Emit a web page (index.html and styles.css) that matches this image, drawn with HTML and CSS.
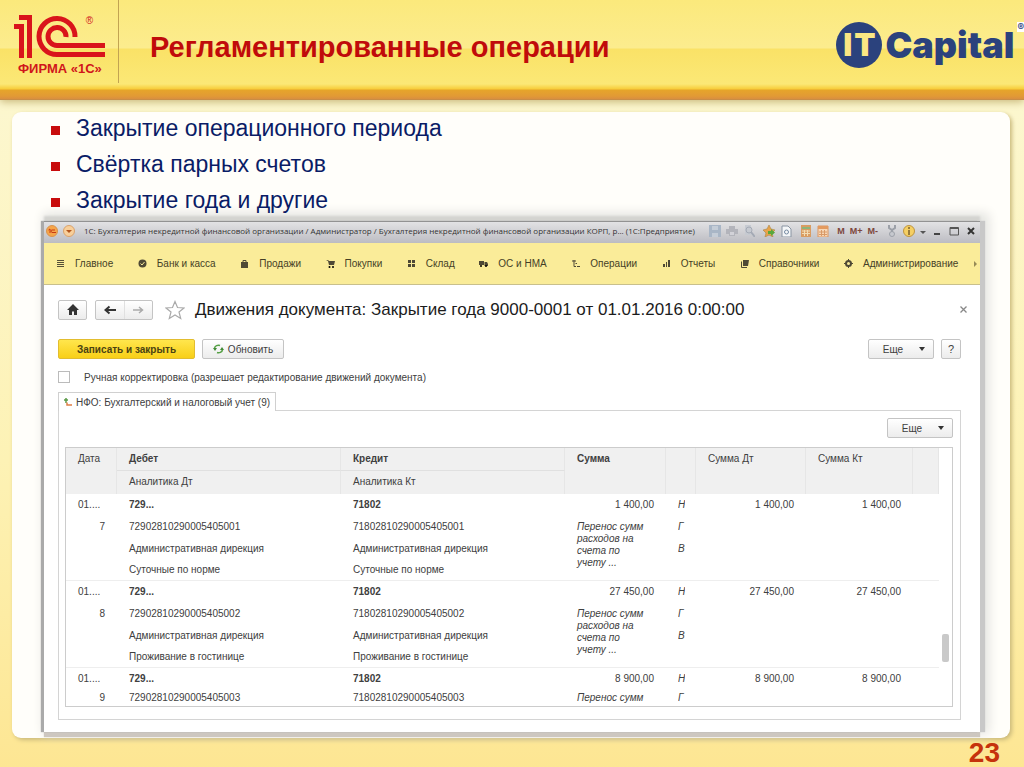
FILE: index.html
```html
<!DOCTYPE html>
<html lang="ru">
<head>
<meta charset="utf-8">
<title>Регламентированные операции</title>
<link rel="stylesheet" href="styles.css">
</head>
<body>
<div class="slide">
<header class="slide-header">
  <div class="firm">
    <svg class="firm-mark" viewBox="0 0 94 46" width="94" height="46" aria-label="1С">
      <g fill="#d9141b"><path d="M6 1H19V44H14V6H6Z"/><path d="M1 10H11V44H6V15H1Z"/></g>
      <g fill="none" stroke="#d9141b" stroke-width="5"><path d="M62 23A18 18 0 1 0 44 40.500H92"/><path d="M53 23A9 9 0 1 0 44 31.500H92"/></g>
    </svg>
    <span class="firm-reg">®</span>
    <span class="firm-name">ФИРМА «1С»</span>
  </div>
  <h1>Регламентированные операции</h1>
  <div class="capital"><span class="it"><span>I</span><span>T</span></span><span class="capital-name">Capital</span><span class="capital-reg">®</span></div>
</header>
<main class="sheet">
  <ul class="points">
    <li>Закрытие операционного периода</li>
    <li>Свёртка парных счетов</li>
    <li>Закрытие года и другие</li>
  </ul>
  <section class="window">
    <div class="titlebar">
      <svg class="orb" viewBox="0 0 12 12"><circle cx="6" cy="6" r="5.500" fill="#f6a54a" stroke="#d9934c"/><path d="M2.500 5L4 4V8M9 5H6Q5 5 5 6T6 7.500H10" stroke="#c63b15" fill="none"/></svg>
      <svg class="orb" viewBox="0 0 12 12"><circle cx="6" cy="6" r="5.500" fill="#f8cf9a" stroke="#d9a26c"/><path d="M3 5H9L6 8Z" fill="#b4561c"/></svg>
      <span class="caption">1С: Бухгалтерия некредитной финансовой организации / Администратор / Бухгалтерия некредитной финансовой организации КОРП, р... (1С:Предприятие)</span>
      <div class="tools">
        <button aria-label="Сохранить"><svg viewBox="0 0 12 12"><path d="M0 0H12V12H0Z" fill="#a9b6c6"/><path d="M3 1H9V5H3ZM3 8H9V12H3Z" fill="#c5cdd7"/></svg></button>
        <button aria-label="Печать"><svg viewBox="0 0 12 12"><path d="M3 1H9V4H12V9H9V11H3V9H0V4H3Z" fill="#b3b4bb"/><path d="M4 7H8V10H4Z" fill="#d2d2d8"/></svg></button>
        <button aria-label="Просмотр"><svg viewBox="0 0 12 12"><path d="M2 0H8V10H2Z" fill="#c6cad1"/><circle cx="6" cy="5" r="3" fill="none" stroke="#a4aab5"/><path d="M8 7L12 12" stroke="#a4aab5" stroke-width="2"/></svg></button>
        <button class="apart" aria-label="В избранное"><svg viewBox="0 0 12 12"><path d="M6 0L8 4L12 5L9 8L10 12L6 10L2 12L3 8L0 5L4 4Z" fill="#e8a349" stroke="#a98445" stroke-width=".6"/><path d="M5 6H8V4L12 7.500L8 11V9H5Z" fill="#59a83c"/></svg></button>
        <button aria-label="Ссылка"><svg viewBox="0 0 12 12"><path d="M2 1H8L11 4V12H2Z" fill="#f4f6f8" stroke="#8994a2"/><circle cx="6.500" cy="7" r="2" fill="none" stroke="#758aa2"/></svg></button>
        <button class="apart" aria-label="Калькулятор"><svg viewBox="0 0 12 12"><path d="M1 0H11V12H1Z" fill="#d99c62"/><path d="M2 2H10V4H2Z" fill="#8db57a"/><path d="M2 6H10M2 8.500H10M4.500 5V11M7.500 5V11" stroke="#f2dcb4"/></svg></button>
        <button aria-label="Календарь"><svg viewBox="0 0 12 12"><path d="M1 1H11V12H1Z" fill="#f7d7b6" stroke="#dc9560"/><path d="M1 1H11V4H1Z" fill="#e39a60"/><path d="M2 7H10M2 9.500H10M4.500 5V11M7.500 5V11" stroke="#d99a68"/></svg></button>
        <button class="memory apart">M</button>
        <button class="memory">M+</button>
        <button class="memory">M-</button>
        <button class="apart" aria-label="Сервис"><svg viewBox="0 0 12 12"><path d="M3 0V3L6 5L9 3V0M6 5V11" fill="none" stroke="#9ca0a8" stroke-width="2"/><circle cx="6" cy="9" r="2.500" fill="#c7c9cf" stroke="#9ca0a8"/></svg></button>
        <button aria-label="Справка"><svg viewBox="0 0 12 12"><circle cx="6" cy="6" r="5.500" fill="#f5cf63" stroke="#bd9440"/><path d="M6 2V4M6 5V10" stroke="#7b6230" stroke-width="1.500"/></svg></button>
        <button class="slim" aria-label="Меню справки"><svg viewBox="0 0 6 12"><path d="M0 6H6L3 9Z" fill="#555"/></svg></button>
        <button aria-label="Свернуть"><svg viewBox="0 0 12 12"><path d="M3 9H9" stroke="#444" stroke-width="2"/></svg></button>
        <button aria-label="Развернуть"><svg viewBox="0 0 12 12"><path d="M2 2.500H10.500V10H2Z" fill="none" stroke="#555"/><path d="M2 3H10" stroke="#555" stroke-width="2"/></svg></button>
        <button aria-label="Закрыть окно"><svg viewBox="0 0 12 12"><path d="M3 3L9 9M9 3L3 9" stroke="#333" stroke-width="2"/></svg></button>
      </div>
    </div>
    <nav class="sections">
      <a href="#"><svg viewBox="0 0 9 9"><path d="M1 1.500H8M1 3.500H8M1 5.500H8M1 7.500H8" stroke="#555038"/></svg>Главное</a>
      <a href="#"><svg viewBox="0 0 9 9"><circle cx="4.500" cy="4.500" r="4" fill="#4e4935"/><path d="M2.500 4.500L4 6L6.500 3" stroke="#f9ec9a" fill="none"/></svg>Банк и касса</a>
      <a href="#"><svg viewBox="0 0 9 9"><path d="M1 3H8V9H1Z" fill="#4e4935"/><path d="M3 4V1.500H6V4" fill="none" stroke="#4e4935"/></svg>Продажи</a>
      <a href="#"><svg viewBox="0 0 9 9"><path d="M0 1H2L3 2H9L8 6H3L2 2Z" fill="#4e4935"/><circle cx="3.500" cy="8" r="1"/><circle cx="7" cy="8" r="1"/></svg>Покупки</a>
      <a href="#"><svg viewBox="0 0 9 9"><path d="M1 1H4V4H1ZM5 1H8V4H5ZM1 5H4V8H1ZM5 5H8V8H5Z" fill="#4e4935"/></svg>Склад</a>
      <a href="#"><svg viewBox="0 0 9 9"><path d="M0 2H5V6H0ZM5.500 3H8L9 5V7H5.500Z" fill="#4e4935"/><circle cx="2" cy="7" r="1"/><circle cx="7" cy="7" r="1"/></svg>ОС и НМА</a>
      <a href="#"><svg viewBox="0 0 9 9"><path d="M1 2H5M3 1V7.500H5M6 7.500H9M4.500 4.500H6" stroke="#4e4935" fill="none"/></svg>Операции</a>
      <a href="#"><svg viewBox="0 0 9 9"><path d="M1 5H3V8H1ZM4 3H5V8H4ZM6 1H8V8H6Z" fill="#4e4935"/></svg>Отчеты</a>
      <a href="#"><svg viewBox="0 0 9 9"><path d="M3 1H9L8 7H3Z" fill="#4e4935"/><path d="M1.500 2.500V8.500H7" stroke="#4e4935" fill="none"/></svg>Справочники</a>
      <a href="#"><svg viewBox="0 0 9 9"><circle cx="4.500" cy="4.500" r="2.500" fill="none" stroke="#4e4935" stroke-width="2"/><path d="M4.500 0V2M4.500 7V9M0 4.500H2M7 4.500H9" stroke="#4e4935"/></svg>Администрирование</a>
      <button class="more" aria-label="Ещё разделы"><svg viewBox="0 0 4 6"><path d="M0 0L3 3L0 6Z" fill="#958a56"/></svg></button>
    </nav>
    <div class="form">
      <div class="form-head">
        <button class="btn home" aria-label="Домой"><svg width="12" height="12" viewBox="0 0 12 12"><path d="M6 0L12 6H10V11H7V7.500H5V11H2V6H0Z" fill="#333"/></svg></button>
        <div class="history">
          <button aria-label="Назад"><svg width="12" height="10" viewBox="0 0 12 10"><path d="M12 5H2M5.500 1.500L1.500 5L5.500 8.500" stroke="#333" stroke-width="2" fill="none"/></svg></button>
          <button aria-label="Вперёд"><svg width="12" height="10" viewBox="0 0 12 10"><path d="M1 5H10M7 2L10.500 5L7 8" stroke="#aaa" stroke-width="1.500" fill="none"/></svg></button>
        </div>
        <svg class="star" viewBox="0 0 20 20"><path d="M10 1.500L12.500 7.500L19 8L14 12L15.700 18.500L10 15L4.300 18.500L6 12L1 8L7.500 7.500Z" fill="none" stroke="#aaa" stroke-width="1.200"/></svg>
        <h2>Движения документа: Закрытие года 9000-0001 от 01.01.2016 0:00:00</h2>
        <button class="close" aria-label="Закрыть"><svg width="7" height="7" viewBox="0 0 7 7"><path d="M.5.5L6.500 6.500M6.500.5L.5 6.500" stroke="#888" stroke-width="1.300"/></svg></button>
      </div>
      <div class="commands">
        <button class="btn primary">Записать и закрыть</button>
        <button class="btn refresh"><svg width="11" height="10" viewBox="0 0 11 10"><path d="M1.500 4A4 3.500 0 0 1 7 1.500M9.500 6A4 3.500 0 0 1 4 8.500" stroke="#55a045" stroke-width="1.500" fill="none"/><path d="M0 4H4L2 7ZM7 6H11L9 3Z" fill="#3f8a35"/></svg>Обновить</button>
        <button class="btn drop">Еще<svg width="6" height="4" viewBox="0 0 6 4"><path d="M0 0H6L3 4Z" fill="#333"/></svg></button>
        <button class="btn help">?</button>
      </div>
      <label class="manual"><input type="checkbox">Ручная корректировка (разрешает редактирование движений документа)</label>
      <div class="tabs" role="tablist"><button class="tab" role="tab" aria-selected="true"><svg width="8" height="8" viewBox="0 0 8 8"><path d="M0 2H4M2 0V5" stroke="#5b9b48" stroke-width="1.500"/><path d="M3 4.500V7H8" stroke="#df7d45" stroke-width="1.500" fill="none"/></svg>НФО: Бухгалтерский и налоговый учет (9)</button></div>
      <div class="pane" role="tabpanel">
        <div class="pane-bar"><button class="btn drop">Еще<svg width="6" height="4" viewBox="0 0 6 4"><path d="M0 0H6L3 4Z" fill="#333"/></svg></button></div>
        <div class="grid">
          <table>
            <colgroup><col class="c-date"><col><col><col class="c-sum"><col class="c-mark"><col class="c-dt"><col class="c-kt"><col class="c-rest"></colgroup>
            <thead>
              <tr><th rowspan="2">Дата</th><th class="strong split">Дебет</th><th class="strong split">Кредит</th><th rowspan="2" class="strong">Сумма</th><th rowspan="2"></th><th rowspan="2">Сумма Дт</th><th rowspan="2">Сумма Кт</th><th rowspan="2"></th></tr>
              <tr><th class="sub">Аналитика Дт</th><th class="sub">Аналитика Кт</th></tr>
            </thead>
            <tbody>
              <tr><td>01....</td><td class="strong">729...</td><td class="strong">71802</td><td class="num">1 400,00</td><td class="mark"><span>Н</span></td><td class="num">1 400,00</td><td class="num">1 400,00</td><td></td></tr>
              <tr><td class="num">7</td><td>72902810290005405001</td><td>71802810290005405001</td><td class="note" rowspan="3">Перенос сумм расходов на счета по учету ...</td><td class="mark"><span>Г</span></td><td></td><td></td><td></td></tr>
              <tr><td></td><td>Административная дирекция</td><td>Административная дирекция</td><td class="mark"><span>В</span></td><td></td><td></td><td></td></tr>
              <tr><td></td><td>Суточные по норме</td><td>Суточные по норме</td><td></td><td></td><td></td><td></td></tr>
            </tbody>
            <tbody>
              <tr><td>01....</td><td class="strong">729...</td><td class="strong">71802</td><td class="num">27 450,00</td><td class="mark"><span>Н</span></td><td class="num">27 450,00</td><td class="num">27 450,00</td><td></td></tr>
              <tr><td class="num">8</td><td>72902810290005405002</td><td>71802810290005405002</td><td class="note" rowspan="3">Перенос сумм расходов на счета по учету ...</td><td class="mark"><span>Г</span></td><td></td><td></td><td></td></tr>
              <tr><td></td><td>Административная дирекция</td><td>Административная дирекция</td><td class="mark"><span>В</span></td><td></td><td></td><td></td></tr>
              <tr><td></td><td>Проживание в гостинице</td><td>Проживание в гостинице</td><td></td><td></td><td></td><td></td></tr>
            </tbody>
            <tbody>
              <tr><td>01....</td><td class="strong">729...</td><td class="strong">71802</td><td class="num">8 900,00</td><td class="mark"><span>Н</span></td><td class="num">8 900,00</td><td class="num">8 900,00</td><td></td></tr>
              <tr><td class="num">9</td><td>72902810290005405003</td><td>71802810290005405003</td><td class="note">Перенос сумм</td><td class="mark"><span>Г</span></td><td></td><td></td><td></td></tr>
            </tbody>
          </table>
          <div class="scroll"><span class="thumb"></span></div>
        </div>
      </div>
    </div>
  </section>
</main>
<footer class="slide-number">23</footer>
</div>
</body>
</html>
```
FILE: styles.css
```css
* { box-sizing: border-box; }
body { margin: 0; font-family: "Liberation Sans", Arial, sans-serif; }
button { font: inherit; color: inherit; padding: 0; border: 0; background: none; }
.slide {
  min-height: 100vh;
  display: flex;
  flex-direction: column;
  background: linear-gradient(#fcf7cf 100px, #fdf2b5 60%, #fde693);
  border-bottom: 1px solid #fffa7d;
}
.slide-header {
  display: flex;
  align-items: flex-start;
  height: 100px;
  background: linear-gradient(#fbe97c, #fcec8e 48px, #fae267 49px, #fbe876 84px, #f7cd3a 89px, #e6a52a 90px, #e29a35 96px, #d98f40 99px, #b98a4a 100px);
  box-shadow: 0 2px 8px #c9b87a;
}
.firm {
  display: grid;
  grid-template-columns: 84px 1fr;
  align-content: start;
  width: 119px;
  height: 83px;
  padding: 14px 0 0 13px;
  border-right: 1px solid #c2a352;
  color: #d0151b;
}
.firm-mark { grid-area: 1 / 1 / 2 / 3; }
.firm-reg { grid-area: 1 / 1 / 2 / 3; justify-self: end; padding-right: 25px; font-size: 10px; line-height: 14px; }
.firm-name { grid-column: 1 / 3; padding-left: 5px; font-size: 13px; line-height: 18px; font-weight: bold; white-space: nowrap; }
h1 { margin: 0 0 0 31px; font-size: 29px; line-height: 94px; color: #c00b0b; }
.capital { display: flex; margin-left: auto; padding-top: 22px; color: #2b427d; font-family: Inter, "DejaVu Sans", sans-serif; font-weight: 900; }
.it { display: flex; justify-content: center; gap: 2px; width: 46px; height: 46px; border-radius: 50%; background: #2b427d; color: #fbe783; font-size: 31px; line-height: 46px; }
.capital-name { margin: 0 3px; font-size: 36px; line-height: 46px; }
.capital-reg { align-self: flex-start; background: #fff; font-size: 10px; line-height: 10px; }
.sheet {
  margin: 12px 14px 0 12px;
  padding: 0 30px 6px 32px;
  border-radius: 9px;
  background: #fffefa;
  box-shadow: 2px 2px 4px #c9b87a;
}
.points { display: grid; gap: 4px; margin: 0; padding: 0 0 0 7px; list-style: none; font-size: 23px; line-height: 32px; color: #0a1c66; }
.points li { display: flex; align-items: center; gap: 16px; }
.points li::before { content: ""; width: 9px; height: 9px; margin-top: 4px; background: #c80c0c; }
.window {
  margin-top: 5px;
  background: #fff;
  box-shadow: -3px 0 1px #aaa, 5px 0 1px #c8c8c8, 0 5px 1px #cdc7c0, 0 -5px 2px #d4d4d0, 4px -3px 10px 5px #e4e4e0;
}
.titlebar {
  display: flex;
  align-items: center;
  gap: 5px;
  height: 22px;
  padding: 0 3px 4px 2px;
  border-top: 1px solid #929292;
  background: linear-gradient(#e2e2e4, #bcbcc2);
  font-size: 9px;
  color: #333;
}
.orb { width: 12px; height: 12px; flex: none; }
.caption { padding-left: 4px; font-family: "Open Sans", "Liberation Sans", sans-serif; font-size: 8px; white-space: nowrap; }
.tools { display: flex; gap: 5px; margin-left: auto; align-items: center; }
.tools button { height: 12px; }
.tools svg { display: block; width: 12px; height: 12px; }
.tools .slim svg { width: 6px; }
.tools .apart { margin-left: 3px; }
.tools .memory { font-size: 9px; font-weight: bold; line-height: 12px; color: #7c463c; }
.sections {
  display: flex;
  align-items: center;
  justify-content: space-between;
  height: 42px;
  padding: 0 2px 0 12px;
  border-bottom: 1px solid #c9c08c;
  background: #faec99;
  font-size: 10px;
}
.sections a { display: flex; align-items: center; gap: 10px; color: #453f26; text-decoration: none; white-space: nowrap; }
.sections a svg { width: 9px; height: 9px; }
.more { display: flex; margin-left: -9px; }
.more svg { width: 4px; height: 6px; }
.form { padding: 14px 19px 12px 14px; font-size: 10px; color: #404040; }
.btn {
  display: flex;
  align-items: center;
  justify-content: center;
  height: 20px;
  border: 1px solid #c4c4c4;
  border-radius: 2px;
  background: linear-gradient(#fff, #ececec);
}
.form-head { display: flex; align-items: center; height: 22px; }
.home { width: 29px; }
.history { display: flex; width: 58px; height: 20px; margin-left: 8px; border: 1px solid #c4c4c4; border-radius: 2px; background: linear-gradient(#fff, #ececec); }
.history button { flex: 1; display: flex; align-items: center; justify-content: center; }
.history button + button { border-left: 1px solid #e0e0e0; }
.star { width: 20px; height: 20px; margin-left: 12px; }
h2 { margin: 0 0 0 10px; font-size: 17px; line-height: 22px; font-weight: normal; color: #1c1c1c; white-space: nowrap; }
.close { display: flex; margin-left: auto; padding: 0 0 2px; margin-right: -6px; }
.commands { display: flex; align-items: center; gap: 7px; margin-top: 18px; }
.primary { width: 137px; border-color: #e2bd2f; background: linear-gradient(#ffe64d, #f8cf17); font-weight: bold; color: #4a4212; }
.refresh { width: 82px; gap: 4px; }
.drop { width: 66px; gap: 16px; padding-left: 6px; }
.commands .drop { margin-left: auto; }
.help { width: 20px; font-size: 11px; }
.manual { display: flex; align-items: center; gap: 14px; height: 14px; margin-top: 11px; }
.manual input { appearance: none; width: 12px; height: 12px; margin: 0; border: 1px solid #bbb; background: #fff; }
.tabs { display: flex; margin: 8px 0 -1px; }
.tab { display: flex; align-items: center; gap: 4px; height: 19px; padding: 0 5px; border: 1px solid #d0d0d0; border-bottom: 0; background: #fff; white-space: nowrap; z-index: 1; }
.pane { padding: 7px 7px 12px 6px; border: 1px solid #d4d4d4; }
.pane-bar { display: flex; justify-content: flex-end; margin-bottom: 9px; }
.grid { display: flex; border: 1px solid #ccc; }
table { flex: 1; width: 0; table-layout: fixed; border-collapse: separate; border-spacing: 0; line-height: 22px; }
.c-date { width: 51px; }
.c-sum { width: 101px; }
.c-mark { width: 30px; }
.c-dt { width: 110px; }
.c-kt { width: 107px; }
.c-rest { width: 26px; }
th { padding: 0 11px 0 12px; height: 22px; border-right: 1px solid #e6e6e6; background: #f0f0f0; font-weight: normal; text-align: left; vertical-align: top; white-space: nowrap; }
.sub { height: 23px; }
.split { border-bottom: 1px solid #e0e0e0; }
td { padding: 0 12px; height: 22px; white-space: nowrap; vertical-align: top; }
tbody tr:last-child td { line-height: 20px; border-bottom: 1px solid #eee; height: 21px; }
tbody:last-child tr:last-child td { line-height: 16px; height: 16px; border-bottom: 0; }
.note { font-style: italic; }
tbody .note[rowspan] { padding: 5px 20px 0 12px; border-bottom: 1px solid #eee; line-height: 12px; white-space: normal; }
.strong { font-weight: bold; }
.num { text-align: right; }
.mark { font-style: italic; }
.mark span { display: block; width: 7px; overflow: hidden; }
.scroll { display: flex; align-items: flex-end; justify-content: center; width: 13px; padding-bottom: 44px; }
.thumb { width: 7px; height: 28px; border-radius: 2px; background: #c9c9c9; }
.slide-number { flex: 1; padding: 0 24px 0 0; text-align: right; font-size: 28px; line-height: 30px; font-weight: bold; color: #c5320c; }
```
